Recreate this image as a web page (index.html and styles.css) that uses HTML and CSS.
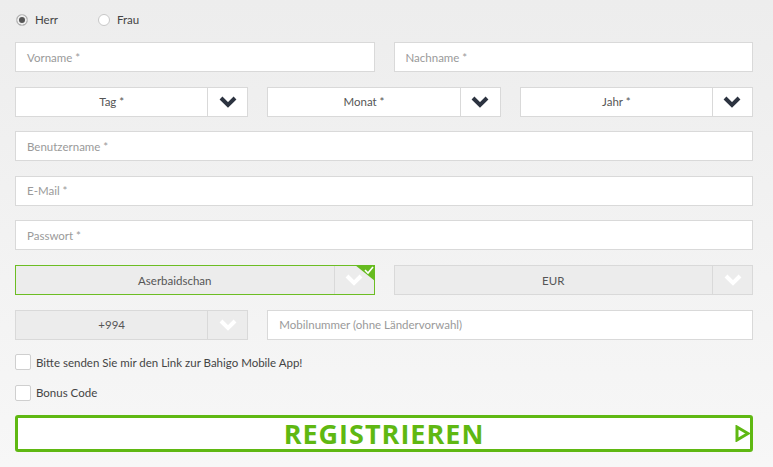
FILE: index.html
```html
<!DOCTYPE html>
<html lang="de">
<head>
  <meta charset="UTF-8">
  <meta name="viewport" content="width=device-width, initial-scale=1.0">
  <link rel="stylesheet" href="styles.css">
  <title>Registrieren</title>
</head>
<body>
  <form class="regForm">
    <div class="genderRow">
      <label class="radio"><span class="dot checked"></span>Herr</label>
      <label class="radio"><span class="dot"></span>Frau</label>
    </div>

    <div class="row two">
      <div class="field"><span class="ph">Vorname *</span></div>
      <div class="field"><span class="ph">Nachname *</span></div>
    </div>

    <div class="row three">
      <div class="select">
        <span class="value">Tag *</span>
        <span class="arrow"><svg width="18" height="12" viewBox="0 0 18 12"><polyline points="2,2 9,9 16,2" fill="none" stroke="#2c3340" stroke-width="4"/></svg></span>
      </div>
      <div class="select">
        <span class="value">Monat *</span>
        <span class="arrow"><svg width="18" height="12" viewBox="0 0 18 12"><polyline points="2,2 9,9 16,2" fill="none" stroke="#2c3340" stroke-width="4"/></svg></span>
      </div>
      <div class="select">
        <span class="value">Jahr *</span>
        <span class="arrow"><svg width="18" height="12" viewBox="0 0 18 12"><polyline points="2,2 9,9 16,2" fill="none" stroke="#2c3340" stroke-width="4"/></svg></span>
      </div>
    </div>

    <div class="field"><span class="ph">Benutzername *</span></div>
    <div class="field"><span class="ph">E-Mail *</span></div>
    <div class="field"><span class="ph">Passwort *</span></div>

    <div class="row two">
      <div class="select grey valid">
        <span class="value">Aserbaidschan</span>
        <span class="arrow"><svg width="18" height="12" viewBox="0 0 18 12"><polyline points="2,2 9,9 16,2" fill="none" stroke="#fff" stroke-width="4"/></svg></span>
        <svg class="okMark" width="20" height="16" viewBox="0 0 20 16"><polygon points="0,0 20,0 20,16" fill="#66bb1f"/><polyline points="10,5 13,8 18,2" fill="none" stroke="#fff" stroke-width="1.6"/></svg>
      </div>
      <div class="select grey">
        <span class="value">EUR</span>
        <span class="arrow"><svg width="18" height="12" viewBox="0 0 18 12"><polyline points="2,2 9,9 16,2" fill="none" stroke="#fff" stroke-width="4"/></svg></span>
      </div>
    </div>

    <div class="row three">
      <div class="select grey">
        <span class="value">+994</span>
        <span class="arrow"><svg width="18" height="12" viewBox="0 0 18 12"><polyline points="2,2 9,9 16,2" fill="none" stroke="#fff" stroke-width="4"/></svg></span>
      </div>
      <div class="field wide"><span class="ph">Mobilnummer (ohne Ländervorwahl)</span></div>
    </div>

    <label class="check"><span class="box"></span>Bitte senden Sie mir den Link zur Bahigo Mobile App!</label>
    <label class="check"><span class="box"></span>Bonus Code</label>

    <div class="submitBtn">
      REGISTRIEREN
      <svg class="play" width="15" height="17" viewBox="0 0 15 17"><polygon points="2,2 13,8.5 2,15" fill="none" stroke="#5fb812" stroke-width="3"/></svg>
    </div>
  </form>
</body>
</html>
```

FILE: styles.css
```css
body{
  margin: 0;
  height: 467px;
  background: linear-gradient(#ededed, #f7f7f7);
  font-family: "Lato", "Liberation Sans", sans-serif;
  font-size: 11.5px;
  color: #555;
}
.regForm{
  display: flex;
  flex-direction: column;
  gap: 14.6px;
  padding: 11.5px 20px 0 15px;
}
.genderRow{
  display: flex;
  height: 16px;
  align-items: center;
}
.radio{
  display: flex;
  align-items: center;
  gap: 7px;
  width: 82px;
  color: #444;
}
.dot{
  box-sizing: border-box;
  width: 12px;
  height: 12px;
  margin-left: 1px;
  border-radius: 50%;
  border: 1px solid #c8c8c8;
  background: #fff;
}
.dot.checked{
  background: #555;
  box-shadow: inset 0 0 0 2px #eee;
}
.row{
  display: grid;
  column-gap: 19px;
}
.two{
  grid-template-columns: 1fr 1fr;
}
.three{
  grid-template-columns: 1fr 1fr 1fr;
}
.field{
  box-sizing: border-box;
  height: 30px;
  border: 1px solid #d9d9d9;
  background: #fff;
  display: flex;
  align-items: center;
  padding-left: 11px;
}
.field.wide{
  grid-column: span 2;
}
.ph{
  color: #9a9a9a;
}
.select{
  position: relative;
  box-sizing: border-box;
  height: 30px;
  border: 1px solid #d9d9d9;
  background: #fff;
  display: flex;
}
.select .value{
  flex: 1;
  display: flex;
  align-items: center;
  justify-content: center;
  color: #555;
}
.select .arrow{
  width: 39px;
  border-left: 1px solid #d9d9d9;
  display: flex;
  align-items: center;
  justify-content: center;
}
.select.grey{
  background: #ececec;
}
.select.valid{
  border-color: #6cbd23;
}
.okMark{
  position: absolute;
  top: -1px;
  right: -1px;
}
.check{
  display: flex;
  align-items: center;
  gap: 5px;
  height: 16px;
  color: #444;
}
.box{
  box-sizing: border-box;
  width: 16px;
  height: 16px;
  border: 1px solid #cfcfcf;
  border-radius: 2px;
  background: #fff;
}
.submitBtn{
  position: relative;
  box-sizing: border-box;
  height: 37px;
  border: 3px solid #5fb812;
  border-radius: 3px;
  background: #fff;
  display: flex;
  align-items: center;
  justify-content: center;
  color: #5fb812;
  font-family: "Open Sans", "Liberation Sans", sans-serif;
  font-weight: 700;
  font-size: 27px;
  letter-spacing: 1px;
}
.play{
  position: absolute;
  right: 0;
  top: 7px;
}
```
